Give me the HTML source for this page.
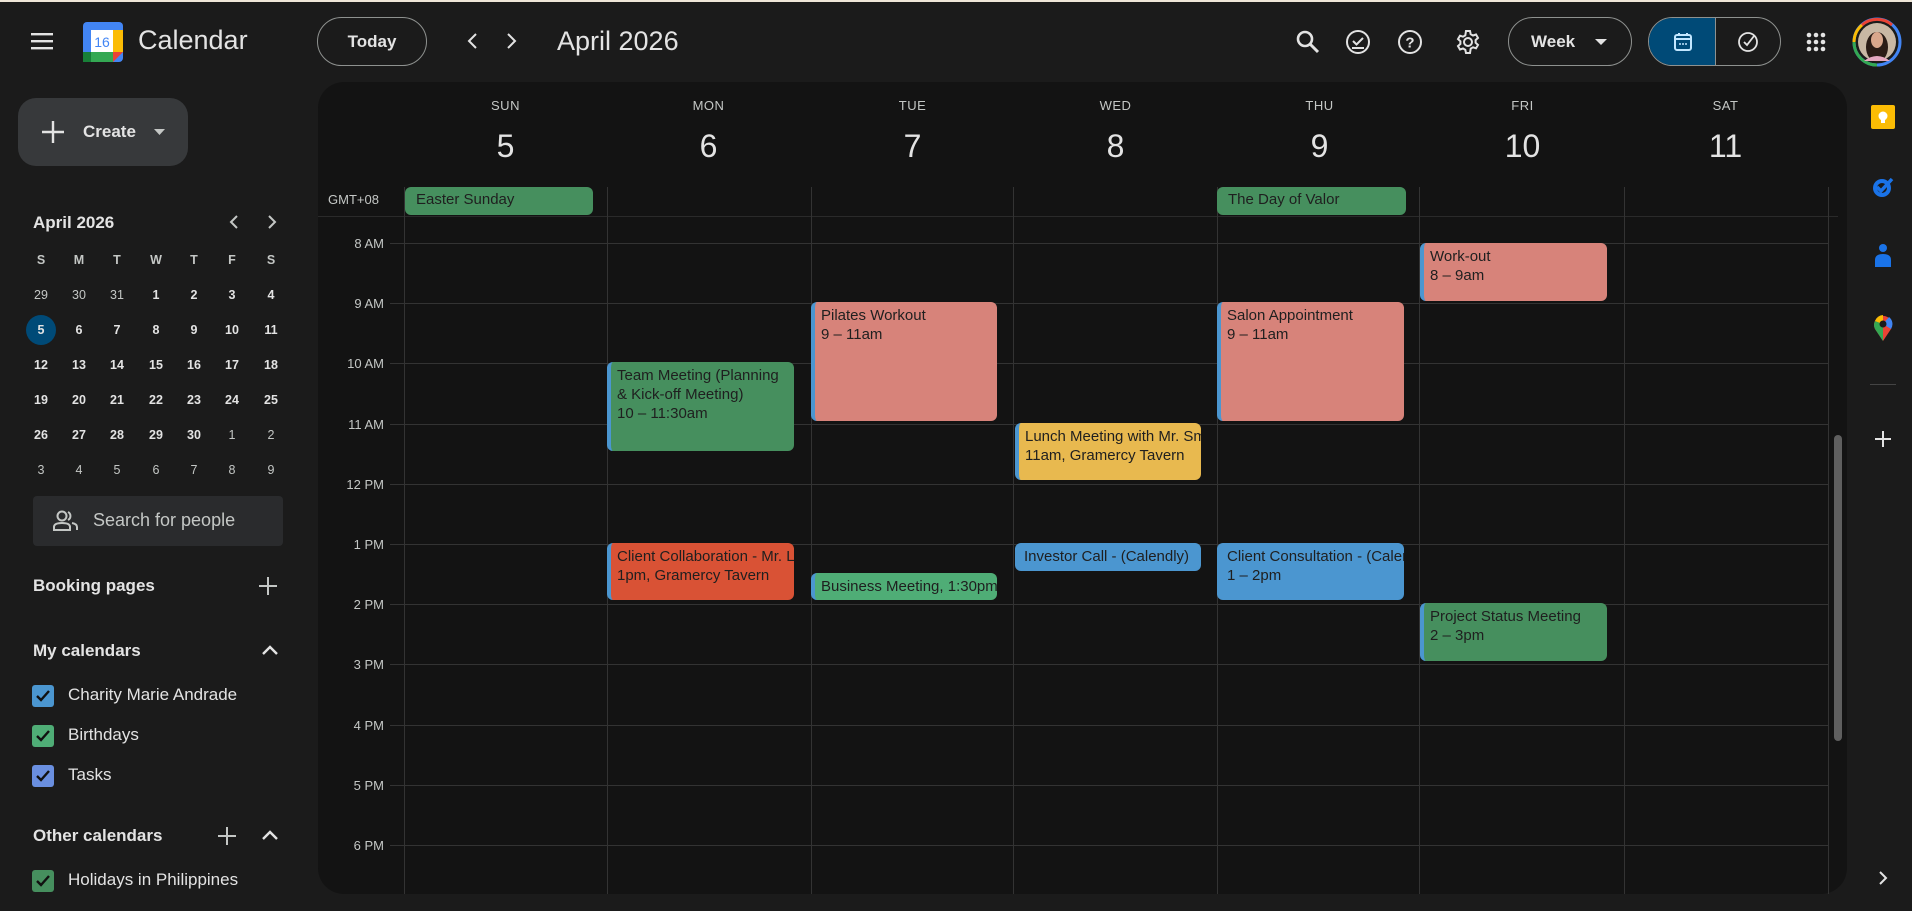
<!DOCTYPE html>
<html><head><meta charset="utf-8"><style>
*{box-sizing:border-box;margin:0;padding:0}
body{width:1912px;height:911px;background:#1b1b1b;font-family:"Liberation Sans",Arial,sans-serif;color:#e3e3e3;position:relative;overflow:hidden}
.a{position:absolute}
.topline{left:0;top:0;width:1912px;height:2px;background:#efe6d8}
.panel{left:318px;top:82px;width:1529px;height:812px;background:#131313;border-radius:26px;overflow:hidden}
.hl{height:1px;background:#333;left:390px;width:1438px}
.vl{width:1px;background:#333;top:187px;height:707px}
.hr{font-size:13px;color:#c4c7c5;width:66px;text-align:right;left:318px}
.dn{font-size:13px;color:#c4c7c5;text-align:center;width:203px;letter-spacing:.5px;top:98px}
.dd{font-size:32px;color:#e3e3e3;text-align:center;width:203px;top:128px}
.ev{border-radius:6px;color:#1f1f1f;font-size:15px;line-height:19px;padding:4px 0 0 6px;overflow:hidden;white-space:nowrap;border-left:4px solid #4b96d0}
.ad{border-radius:6px;background:#468f5e;color:#1f1f1f;font-size:15px;padding:4px 0 0 11px;height:28px;white-space:nowrap}
.mc{font-size:12.5px;font-weight:bold;width:30px;text-align:center;color:#e3e3e3}
.side{font-size:17px;color:#e3e3e3}
.cb{width:22px;height:22px;border-radius:3px;left:32px}
.cb svg{position:absolute;left:3px;top:4px}
</style></head><body>
<div class="a topline"></div>
<svg class="a" style="left:31px;top:32px" width="24" height="18"><rect y="1" width="22" height="2.4" fill="#e3e3e3"/><rect y="8" width="22" height="2.4" fill="#e3e3e3"/><rect y="15" width="22" height="2.4" fill="#e3e3e3"/></svg>
<svg class="a" style="left:83px;top:22px" width="40" height="40" viewBox="0 0 40 40"><rect x="0" y="0" width="40" height="40" rx="4" fill="#4285f4"/><rect x="30" y="8" width="10" height="22" fill="#fbbc04"/><rect x="0" y="30" width="30" height="10" fill="#34a853"/><rect x="0" y="30" width="8" height="10" fill="#188038"/><path d="M30 30 H40 L30 40Z" fill="#ea4335"/><rect x="8" y="8" width="22" height="22" fill="#fff"/><text x="19" y="25" font-size="14" fill="#4285f4" text-anchor="middle" font-family="Liberation Sans">16</text></svg>
<div class="a" style="left:138px;top:25px;font-size:27px;color:#e3e3e3">Calendar</div>
<div class="a" style="left:317px;top:17px;width:110px;height:49px;border:1px solid #8e918f;border-radius:25px;text-align:center;line-height:47px;font-size:17px;font-weight:bold">Today</div>
<svg class="a" style="left:466px;top:32px" width="14" height="18"><path d="M10 2 L3 9 L10 16" stroke="#e3e3e3" stroke-width="2" fill="none"/></svg>
<svg class="a" style="left:504px;top:32px" width="14" height="18"><path d="M4 2 L11 9 L4 16" stroke="#e3e3e3" stroke-width="2" fill="none"/></svg>
<div class="a" style="left:557px;top:26px;font-size:27px;color:#e3e3e3">April 2026</div>
<svg class="a" style="left:1295px;top:29px" width="26" height="26"><circle cx="10" cy="10" r="7" stroke="#e3e3e3" stroke-width="2.6" fill="none"/><path d="M15 15 L23 23" stroke="#e3e3e3" stroke-width="3"/></svg>
<svg class="a" style="left:1344px;top:28px" width="28" height="28"><circle cx="14" cy="14" r="11" stroke="#e3e3e3" stroke-width="2" fill="none"/><path d="M9 13 L12.5 16.5 L19 10" stroke="#e3e3e3" stroke-width="2" fill="none"/><path d="M8 20 H20" stroke="#e3e3e3" stroke-width="2"/></svg>
<svg class="a" style="left:1396px;top:28px" width="28" height="28"><circle cx="14" cy="14" r="11" stroke="#e3e3e3" stroke-width="2" fill="none"/><text x="14" y="19.5" font-size="15" font-weight="bold" fill="#e3e3e3" text-anchor="middle" font-family="Liberation Sans">?</text></svg>
<svg class="a" style="left:1454px;top:28px" width="28" height="28" viewBox="0 0 28 28"><g fill="none" stroke="#e3e3e3" stroke-width="2"><circle cx="14" cy="14" r="4"/><path d="M12 3h4l.7 3.2 2.3 1.3 3-1 2 3.4-2.4 2.2v2.6l2.4 2.2-2 3.4-3-1-2.3 1.3L16 25h-4l-.7-3.2-2.3-1.3-3 1-2-3.4 2.4-2.2v-2.6L4 11.1l2-3.4 3 1 2.3-1.3z"/></g></svg>
<div class="a" style="left:1508px;top:17px;width:124px;height:49px;border:1px solid #8e918f;border-radius:25px;font-size:17px;font-weight:bold;line-height:47px;padding-left:22px">Week<svg style="position:absolute;left:86px;top:21px" width="12" height="7"><path d="M0 0 H12 L6 6Z" fill="#e3e3e3"/></svg></div>
<div class="a" style="left:1648px;top:17px;width:133px;height:49px;border:1px solid #8e918f;border-radius:25px;overflow:hidden"><div class="a" style="left:0;top:0;width:66px;height:49px;background:#004a77"></div>
<svg class="a" style="left:24px;top:14px" width="20" height="20"><rect x="2" y="3" width="16" height="15" rx="2" stroke="#c2e7ff" stroke-width="2" fill="none"/><path d="M2 7 H18 M6 1 V4 M14 1 V4" stroke="#c2e7ff" stroke-width="2"/><circle cx="7" cy="12" r="1" fill="#c2e7ff"/><circle cx="10" cy="12" r="1" fill="#c2e7ff"/><circle cx="13" cy="12" r="1" fill="#c2e7ff"/></svg>
<div class="a" style="left:66px;top:0;width:1px;height:49px;background:#8e918f"></div>
<svg class="a" style="left:88px;top:13px" width="22" height="22"><circle cx="11" cy="11" r="9" stroke="#e3e3e3" stroke-width="1.8" fill="none"/><path d="M7 11 L10 14 L17 5" stroke="#e3e3e3" stroke-width="1.8" fill="none"/></svg></div>
<svg class="a" style="left:1806px;top:32px" width="20" height="20"><g fill="#e3e3e3"><circle cx="3" cy="3" r="2.3"/><circle cx="10" cy="3" r="2.3"/><circle cx="17" cy="3" r="2.3"/><circle cx="3" cy="10" r="2.3"/><circle cx="10" cy="10" r="2.3"/><circle cx="17" cy="10" r="2.3"/><circle cx="3" cy="17" r="2.3"/><circle cx="10" cy="17" r="2.3"/><circle cx="17" cy="17" r="2.3"/></g></svg>
<svg class="a" style="left:1852px;top:17px" width="50" height="50"><circle cx="25" cy="25" r="23" fill="none" stroke="#4285f4" stroke-width="3"/><path d="M25 48 A23 23 0 0 1 2 25" stroke="#34a853" stroke-width="3" fill="none"/><path d="M2 25 A23 23 0 0 1 10 8" stroke="#fbbc04" stroke-width="3" fill="none"/><path d="M10 8 A23 23 0 0 1 40 8" stroke="#ea4335" stroke-width="3" fill="none"/><circle cx="25" cy="25" r="19" fill="#c9b8a4"/><ellipse cx="25" cy="30" rx="11" ry="15" fill="#2a1c16"/><ellipse cx="25" cy="23" rx="6" ry="8" fill="#d9a78c"/><path d="M12 44 Q25 34 38 44" fill="#e6a8c0"/></svg>

<div class="a" style="left:18px;top:98px;width:170px;height:68px;background:#37393b;border-radius:18px"></div>
<svg class="a" style="left:42px;top:121px" width="22" height="22"><path d="M11 0 V22 M0 11 H22" stroke="#e3e3e3" stroke-width="2.4"/></svg>
<div class="a" style="left:83px;top:122px;font-size:17px;font-weight:bold">Create</div>
<svg class="a" style="left:154px;top:129px" width="12" height="7"><path d="M0 0 H11 L5.5 6Z" fill="#c4c7c5"/></svg>
<div class="a" style="left:33px;top:213px;font-size:17px;font-weight:bold">April 2026</div>
<svg class="a" style="left:228px;top:214px" width="12" height="16"><path d="M9 2 L3 8 L9 14" stroke="#c4c7c5" stroke-width="2" fill="none"/></svg>
<svg class="a" style="left:266px;top:214px" width="12" height="16"><path d="M3 2 L9 8 L3 14" stroke="#c4c7c5" stroke-width="2" fill="none"/></svg>
<div class="a" style="left:26px;top:315px;width:30px;height:30px;border-radius:50%;background:#004a77"></div>
<div id="mini"></div>
<div class="a" style="left:33px;top:496px;width:250px;height:50px;background:#2a2b2d;border-radius:4px"></div>
<svg class="a" style="left:53px;top:510px" width="26" height="22"><circle cx="9" cy="6" r="4.5" stroke="#c4c7c5" stroke-width="2" fill="none"/><path d="M1 20 V17 Q1 13 9 13 Q17 13 17 17 V20 Z" stroke="#c4c7c5" stroke-width="2" fill="none"/><path d="M15 2 A4.5 4.5 0 0 1 15 10 M19 13 Q24 14 24 17 V20" stroke="#c4c7c5" stroke-width="2" fill="none"/></svg>
<div class="a" style="left:93px;top:510px;font-size:18px;color:#c4c7c5">Search for people</div>
<div class="a side" style="left:33px;top:576px;font-weight:bold">Booking pages</div>
<svg class="a" style="left:259px;top:577px" width="18" height="18"><path d="M9 0 V18 M0 9 H18" stroke="#c4c7c5" stroke-width="2"/></svg>
<div class="a side" style="left:33px;top:641px;font-weight:bold">My calendars</div>
<svg class="a" style="left:261px;top:644px" width="18" height="12"><path d="M2 10 L9 3 L16 10" stroke="#e3e3e3" stroke-width="2.4" fill="none"/></svg>
<div class="a cb" style="top:685px;background:#4b96d0"><svg width="16" height="14"><path d="M2 7 L6 11 L14 2" stroke="#111" stroke-width="2.4" fill="none"/></svg></div>
<div class="a side" style="left:68px;top:685px">Charity Marie Andrade</div>
<div class="a cb" style="top:725px;background:#4fad76"><svg width="16" height="14"><path d="M2 7 L6 11 L14 2" stroke="#111" stroke-width="2.4" fill="none"/></svg></div>
<div class="a side" style="left:68px;top:725px">Birthdays</div>
<div class="a cb" style="top:765px;background:#6a8fe0"><svg width="16" height="14"><path d="M2 7 L6 11 L14 2" stroke="#111" stroke-width="2.4" fill="none"/></svg></div>
<div class="a side" style="left:68px;top:765px">Tasks</div>
<div class="a side" style="left:33px;top:826px;font-weight:bold">Other calendars</div>
<svg class="a" style="left:218px;top:827px" width="18" height="18"><path d="M9 0 V18 M0 9 H18" stroke="#c4c7c5" stroke-width="2"/></svg>
<svg class="a" style="left:261px;top:829px" width="18" height="12"><path d="M2 10 L9 3 L16 10" stroke="#e3e3e3" stroke-width="2.4" fill="none"/></svg>
<div class="a cb" style="top:870px;background:#468f5e"><svg width="16" height="14"><path d="M2 7 L6 11 L14 2" stroke="#111" stroke-width="2.4" fill="none"/></svg></div>
<div class="a side" style="left:68px;top:870px">Holidays in Philippines</div>

<div class="a panel"></div>
<div class="a" style="left:318px;top:216px;width:1520px;height:1px;background:#2a2a2a"></div>
<div id="grid"></div>
<div class="a" style="left:328px;top:192px;font-size:13px;color:#c4c7c5">GMT+08</div>
<div class="a ad" style="left:405px;top:187px;width:188px">Easter Sunday</div>
<div class="a ad" style="left:1217px;top:187px;width:189px">The Day of Valor</div>
<div class="a ev" style="left:1420px;top:243px;width:187px;height:58px;background:#d7837a">Work-out<br>8 – 9am</div>
<div class="a ev" style="left:811px;top:302px;width:186px;height:119px;background:#d7837a">Pilates Workout<br>9 – 11am</div>
<div class="a ev" style="left:1217px;top:302px;width:187px;height:119px;background:#d7837a">Salon Appointment<br>9 – 11am</div>
<div class="a ev" style="left:607px;top:362px;width:187px;height:89px;background:#468f5e">Team Meeting (Planning<br>&amp; Kick-off Meeting)<br>10 – 11:30am</div>
<div class="a ev" style="left:1015px;top:423px;width:186px;height:57px;background:#e8b94f">Lunch Meeting with Mr. Smith<br>11am, Gramercy Tavern</div>
<div class="a ev" style="left:607px;top:543px;width:187px;height:57px;background:#d95235">Client Collaboration - Mr. Lee<br>1pm, Gramercy Tavern</div>
<div class="a ev" style="left:811px;top:573px;width:186px;height:27px;background:#4fad76;padding-top:4px">Business Meeting, 1:30pm</div>
<div class="a ev" style="left:1015px;top:543px;width:186px;height:28px;background:#4b96d0;border-left:0;padding-left:9px">Investor Call - (Calendly)</div>
<div class="a ev" style="left:1217px;top:543px;width:187px;height:57px;background:#4b96d0;border-left:0;padding-left:10px">Client Consultation - (Calendly)<br>1 – 2pm</div>
<div class="a ev" style="left:1420px;top:603px;width:187px;height:58px;background:#468f5e">Project Status Meeting<br>2 – 3pm</div>
<div class="a" style="left:1834px;top:435px;width:8px;height:306px;background:#5f5f5f;border-radius:4px"></div>

<svg class="a" style="left:1871px;top:105px" width="24" height="24"><rect x="0" y="0" width="24" height="24" rx="2" fill="#fbbc04"/><circle cx="12" cy="11" r="4.5" fill="#fff"/><rect x="10" y="15" width="4" height="3" fill="#fff"/></svg>
<svg class="a" style="left:1871px;top:175px" width="24" height="24"><circle cx="11" cy="13" r="9" fill="#1a73e8"/><circle cx="11" cy="13" r="5" fill="#1b1b1b"/><path d="M6 12 L10 16 L21 4" stroke="#1a73e8" stroke-width="3.5" fill="none"/></svg>
<svg class="a" style="left:1873px;top:243px" width="20" height="26"><circle cx="10" cy="5" r="4" fill="#1a73e8"/><path d="M2 24 V17 Q2 11 10 11 Q18 11 18 17 V24 Z" fill="#1a73e8"/></svg>
<svg class="a" style="left:1872px;top:313px" width="22" height="30"><path d="M11 28 L3 16 A9 9 0 1 1 19 16 Z" fill="#ea4335"/><path d="M11 28 L3 16 A9 9 0 0 1 3 8 L11 11Z" fill="#34a853"/><path d="M19 16 A9 9 0 0 0 17 4 L11 11Z" fill="#4285f4"/><path d="M3 8 A9 9 0 0 1 11 2 L11 11Z" fill="#fbbc04"/><circle cx="11" cy="11" r="3.5" fill="#1b1b1b"/></svg>
<div class="a" style="left:1870px;top:384px;width:26px;height:1px;background:#444"></div>
<svg class="a" style="left:1874px;top:430px" width="18" height="18"><path d="M9 1 V17 M1 9 H17" stroke="#e3e3e3" stroke-width="2"/></svg>
<svg class="a" style="left:1877px;top:870px" width="12" height="16"><path d="M3 2 L9 8 L3 14" stroke="#e3e3e3" stroke-width="2" fill="none"/></svg>

<script>
var g='';
var cols=[404,607,811,1013,1217,1419,1624,1828];
for(var i=0;i<8;i++){g+='<div class="a vl" style="left:'+cols[i]+'px"></div>';}
var hrs=['8 AM','9 AM','10 AM','11 AM','12 PM','1 PM','2 PM','3 PM','4 PM','5 PM','6 PM'];
for(var h=0;h<11;h++){var y=243+h*60.2;g+='<div class="a hl" style="top:'+Math.round(y)+'px"></div><div class="a hr" style="top:'+Math.round(y-7)+'px">'+hrs[h]+'</div>';}
var dn=['SUN','MON','TUE','WED','THU','FRI','SAT'],dd=[5,6,7,8,9,10,11];
for(var d=0;d<7;d++){var x=404+d*203.4;g+='<div class="a dn" style="left:'+Math.round(x)+'px">'+dn[d]+'</div><div class="a dd" style="left:'+Math.round(x)+'px">'+dd[d]+'</div>';}
document.getElementById('grid').innerHTML=g;
var m='';var cx=[41,79,117,156,194,232,271];
var wd=['S','M','T','W','T','F','S'];
for(var c=0;c<7;c++)m+='<div class="a mc" style="left:'+(cx[c]-15)+'px;top:253px;color:#c4c7c5">'+wd[c]+'</div>';
var rows=[[29,30,31,1,2,3,4],[5,6,7,8,9,10,11],[12,13,14,15,16,17,18],[19,20,21,22,23,24,25],[26,27,28,29,30,1,2],[3,4,5,6,7,8,9]];
var ry=[288,323,358,393,428,463];
for(var r=0;r<6;r++)for(c=0;c<7;c++){var dim=(r==0&&c<3)||(r>=4&&(r==5||c>=5));m+='<div class="a mc" style="left:'+(cx[c]-15)+'px;top:'+ry[r]+'px;'+(dim?'color:#c4c7c5;font-weight:normal':'')+'">'+rows[r][c]+'</div>';}
document.getElementById('mini').innerHTML=m;
</script>
</body></html>
